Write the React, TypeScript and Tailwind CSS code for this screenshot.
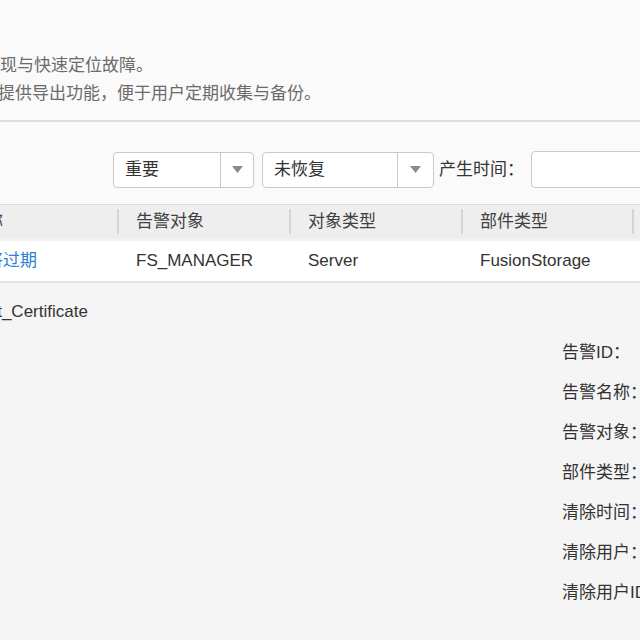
import React from "react";

type Col = { key: string; title: string; width: number };

const columns: Col[] = [
  { key: "name", title: "告警名称", width: 201 },
  { key: "object", title: "告警对象", width: 172 },
  { key: "objType", title: "对象类型", width: 172 },
  { key: "partType", title: "部件类型", width: 171 },
  { key: "time", title: "产生时间", width: 172 },
];

const row: Record<string, string> = {
  name: "证书即将过期",
  object: "FS_MANAGER",
  objType: "Server",
  partType: "FusionStorage",
  time: "",
};

const detailLabels = [
  "告警ID：",
  "告警名称：",
  "告警对象：",
  "部件类型：",
  "清除时间：",
  "清除用户：",
  "清除用户ID：",
];

function Select({ value, width, arrowWidth }: { value: string; width: string; arrowWidth: string }) {
  return (
    <div className={`flex h-[36px] ${width} items-stretch rounded-[4px] border border-[#c9c9c9] bg-white`}>
      <div className="flex flex-1 items-center pl-[11px] text-[17px] text-[#333]">{value}</div>
      <div className={`flex ${arrowWidth} items-center justify-center border-l border-[#c9c9c9]`}>
        <svg width="11" height="7" viewBox="0 0 11 7">
          <path d="M0 0 L11 0 L5.5 7 Z" fill="#8a8a8a" />
        </svg>
      </div>
    </div>
  );
}

export default function App() {
  return (
    <div
      className="h-[640px] w-[640px] overflow-hidden bg-[#f5f5f5] text-[17px]"
      style={{ fontFamily: '"Liberation Sans", "Noto Sans CJK SC", sans-serif' }}
    >
      {/* intro */}
      <div className="h-[122px] border-b-2 border-[#dedede] bg-[#fafafa] pt-[52px] leading-[28px] text-[#6b6b6b] whitespace-nowrap">
        <p className="ml-[-119px]">帮助用户及时发现与快速定位故障。</p>
        <p className="ml-[-87px]">对告警列表提供导出功能，便于用户定期收集与备份。</p>
      </div>

      <div className="bg-[#fafafa] pb-[16px]">
        {/* filters */}
        <div className="flex items-center pt-[29px] whitespace-nowrap">
          <div className="ml-[113px]">
            <Select value="重要" width="w-[141px]" arrowWidth="w-[33px]" />
          </div>
          <div className="ml-[8px]">
            <Select value="未恢复" width="w-[172px]" arrowWidth="w-[36px]" />
          </div>
          <span className="ml-[5px] text-[#333]">产生时间：</span>
          <div className="ml-[7px] h-[37px] w-[160px] shrink-0 rounded-[4px] border border-[#c9c9c9] bg-white" />
        </div>
      </div>

      {/* table */}
      <div className="ml-[-82px] whitespace-nowrap">
        <div className="flex h-[35px] border-t border-[#dcdcdc] bg-[#eeeeee] text-[#404040]">
          {columns.map((c, i) => (
            <div
              key={c.key}
              style={{ width: c.width }}
              className="relative flex shrink-0 items-center pl-[17px]"
            >
              {c.title}
              {i < columns.length - 1 && (
                <span className="absolute right-0 top-[4px] h-[25px] w-[2px] bg-[#d4d4d4]" />
              )}
            </div>
          ))}
        </div>
        <div className="flex h-[44px] border-y-2 border-[#e2e2e2] border-t-[#f3f3f3] bg-white text-[#333]">
          {columns.map((c) => (
            <div key={c.key} style={{ width: c.width }} className="flex shrink-0 items-center pl-[17px]">
              <span className={c.key === "name" ? "text-[#2a7fd6]" : ""}>{row[c.key]}</span>
            </div>
          ))}
        </div>
      </div>

      {/* detail */}
      <div className="pt-[17px] whitespace-nowrap text-[#333]">
        <div className="ml-[-34px] leading-[24px]">Root_Certificate</div>
        <div className="mt-[9px] grid grid-cols-[562px_1fr]">
          <div />
          <div className="flex flex-col">
            {detailLabels.map((l) => (
              <div key={l} className="flex h-[40px] items-center">
                {l}
              </div>
            ))}
          </div>
        </div>
      </div>
    </div>
  );
}
